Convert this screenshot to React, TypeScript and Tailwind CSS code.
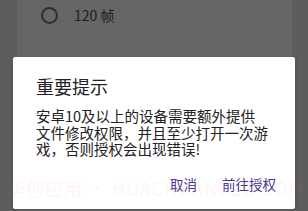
import React from "react";

export default function App() {
  return (
    <div
      className="relative w-[308px] h-[211px] overflow-hidden bg-[#5d5d5d]"
      style={{ fontFamily: '"Noto Sans CJK SC", "Noto Sans", sans-serif' }}
    >
      <div className="mx-[17px] h-full bg-[#666666] w-[275px]">
        <div className="flex items-center pt-[5px] pl-[24px] gap-[16px]">
          <div className="w-[17px] h-[17px] rounded-full border-2 border-[#2f2f2f]" />
          <span className="text-[14px] leading-[20px] text-[#1e1e1e]">120 帧</span>
        </div>
      </div>

      <div className="absolute left-[13px] top-[57px] w-[282px] h-[152px] bg-white rounded-[2px] shadow-[0_1px_4px_rgba(0,0,0,0.2)] pl-[23px] pr-[19px] pt-[17px]">
        <div className="text-[18px] leading-[24px] text-[#222222]">重要提示</div>
        <div className="mt-[10px] text-[14.5px] leading-[16.5px] text-[#222222]">
          <div>安卓10及以上的设备需要额外提供</div>
          <div>文件修改权限，并且至少打开一次游</div>
          <div>戏，否则授权会出现错误!</div>
        </div>
        <div className="mt-[17px] flex justify-end gap-[25px] text-[13.5px] leading-[18px] text-[#4a3590]">
          <span>取消</span>
          <span>前往授权</span>
        </div>
      </div>

      <div className="pointer-events-none absolute left-[7px] top-[177px] text-[18px] leading-[22px] tracking-[1px] whitespace-nowrap text-[#ff66cc] opacity-[0.07]">
        华创应用 • HUACHUANGZB.COM
      </div>
    </div>
  );
}
